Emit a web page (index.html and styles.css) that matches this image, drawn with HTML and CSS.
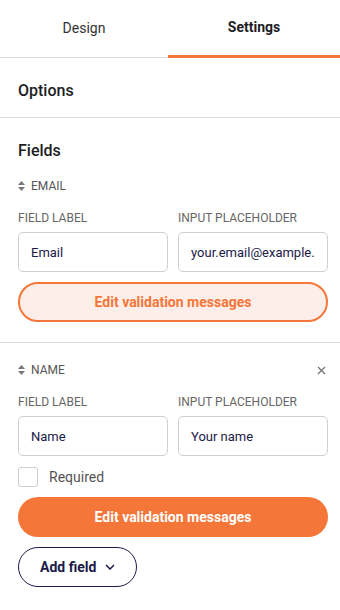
FILE: index.html
```html
<!DOCTYPE html>
<html lang="en">
<head>
    <meta charset="UTF-8">
    <meta name="viewport" content="width=device-width, initial-scale=1.0">
    <title>Form Settings</title>
    <link rel="stylesheet" href="styles.css">
</head>
<body>
    <div class="panel">
        <div class="tabs">
            <div class="tab">Design</div>
            <div class="tab active">Settings</div>
        </div>

        <div class="options">
            <h3>Options</h3>
        </div>

        <div class="fields">
            <h3 class="fields-title">Fields</h3>

            <div class="field">
                <div class="field-head">
                    <span class="field-name">
                        <svg class="sort" width="7" height="10" viewBox="0 0 7 10"><path d="M3.5 0L7 4H0z M3.5 10L0 6h7z" fill="#777"/></svg>
                        EMAIL
                    </span>
                </div>
                <div class="grid">
                    <label class="lbl">FIELD LABEL</label>
                    <label class="lbl">INPUT PLACEHOLDER</label>
                    <div class="input">Email</div>
                    <div class="input">your.email@example.</div>
                </div>
                <button class="btn btn-light">Edit validation messages</button>
            </div>

            <div class="field">
                <div class="field-head">
                    <span class="field-name">
                        <svg class="sort" width="7" height="10" viewBox="0 0 7 10"><path d="M3.5 0L7 4H0z M3.5 10L0 6h7z" fill="#777"/></svg>
                        NAME
                    </span>
                    <svg class="close" width="9" height="9" viewBox="0 0 9 9"><path d="M1 1l7 7M8 1L1 8" stroke="#777" stroke-width="1.4"/></svg>
                </div>
                <div class="grid">
                    <label class="lbl">FIELD LABEL</label>
                    <label class="lbl">INPUT PLACEHOLDER</label>
                    <div class="input">Name</div>
                    <div class="input">Your name</div>
                </div>
                <div class="check">
                    <span class="box"></span>
                    <span>Required</span>
                </div>
                <button class="btn btn-solid">Edit validation messages</button>
                <button class="btn-add">
                    Add field
                    <svg width="10" height="6" viewBox="0 0 10 6"><path d="M1 1l4 4 4-4" fill="none" stroke="#1b1a48" stroke-width="1.5"/></svg>
                </button>
            </div>
        </div>
    </div>
</body>
</html>
```

FILE: styles.css
```css
body {
    margin: 0;
    background: #fff;
    font-family: Roboto, "Liberation Sans", sans-serif;
    color: #1d1d1f;
}
.panel {
    width: 340px;
}
.tabs {
    display: flex;
    height: 58px;
    border-bottom: 1px solid #dcdcdc;
    box-sizing: border-box;
}
.tab {
    flex: 1;
    display: flex;
    align-items: center;
    justify-content: center;
    font-size: 14px;
    color: #333;
    padding-bottom: 2px;
}
.tab:first-child {
    flex: 0 0 168px;
}
.tab.active {
    font-weight: 700;
    color: #1d1d1f;
    border-bottom: 3px solid #f47638;
    margin-bottom: -1px;
    padding-bottom: 1px;
}
h3 {
    margin: 0;
    font-size: 16px;
    font-weight: 500;
    line-height: 20px;
}
.options {
    height: 60px;
    padding: 6px 18px 0;
    display: flex;
    align-items: center;
    border-bottom: 1px solid #dcdcdc;
    box-sizing: border-box;
}
.fields-title {
    padding: 23px 18px 0;
}
.field {
    padding: 17px 13px 20px 18px;
}
.field + .field {
    border-top: 1px solid #dcdcdc;
    padding-top: 19px;
}
.field-head {
    display: flex;
    justify-content: space-between;
    align-items: center;
    height: 16px;
    margin-bottom: 16px;
}
.field-name {
    display: flex;
    align-items: center;
    gap: 6px;
    font-size: 12px;
    color: #555;
}
.close {
    margin-right: 1px;
}
.grid {
    display: grid;
    grid-template-columns: 150px 150px;
    column-gap: 10px;
    row-gap: 6px;
}
.lbl {
    font-size: 12px;
    line-height: 16px;
    color: #666;
}
.input {
    height: 40px;
    box-sizing: border-box;
    border: 1px solid #cfcfcf;
    border-radius: 5px;
    padding: 0 12px;
    display: flex;
    align-items: center;
    font-size: 13px;
    color: #1b1a48;
    white-space: nowrap;
    overflow: hidden;
}
.btn {
    display: block;
    width: 310px;
    height: 40px;
    margin-top: 10px;
    border-radius: 20px;
    font-family: inherit;
    font-size: 14px;
    font-weight: 700;
    cursor: pointer;
}
.btn-light {
    background: #fdeeea;
    border: 2px solid #f47638;
    color: #f47638;
}
.btn-solid {
    background: #f47638;
    border: none;
    color: #fff;
}
.check {
    display: flex;
    align-items: center;
    gap: 11px;
    margin-top: 11px;
    font-size: 14px;
    color: #555;
}
.box {
    width: 20px;
    height: 20px;
    box-sizing: border-box;
    border: 1px solid #cfcfcf;
    border-radius: 3px;
}
.btn-add {
    display: flex;
    align-items: center;
    gap: 9px;
    margin-top: 10px;
    height: 40px;
    padding: 0 21px;
    background: #fff;
    border: 1px solid #1b1a48;
    border-radius: 20px;
    font-family: inherit;
    font-size: 14px;
    font-weight: 700;
    color: #1b1a48;
    cursor: pointer;
}
```
